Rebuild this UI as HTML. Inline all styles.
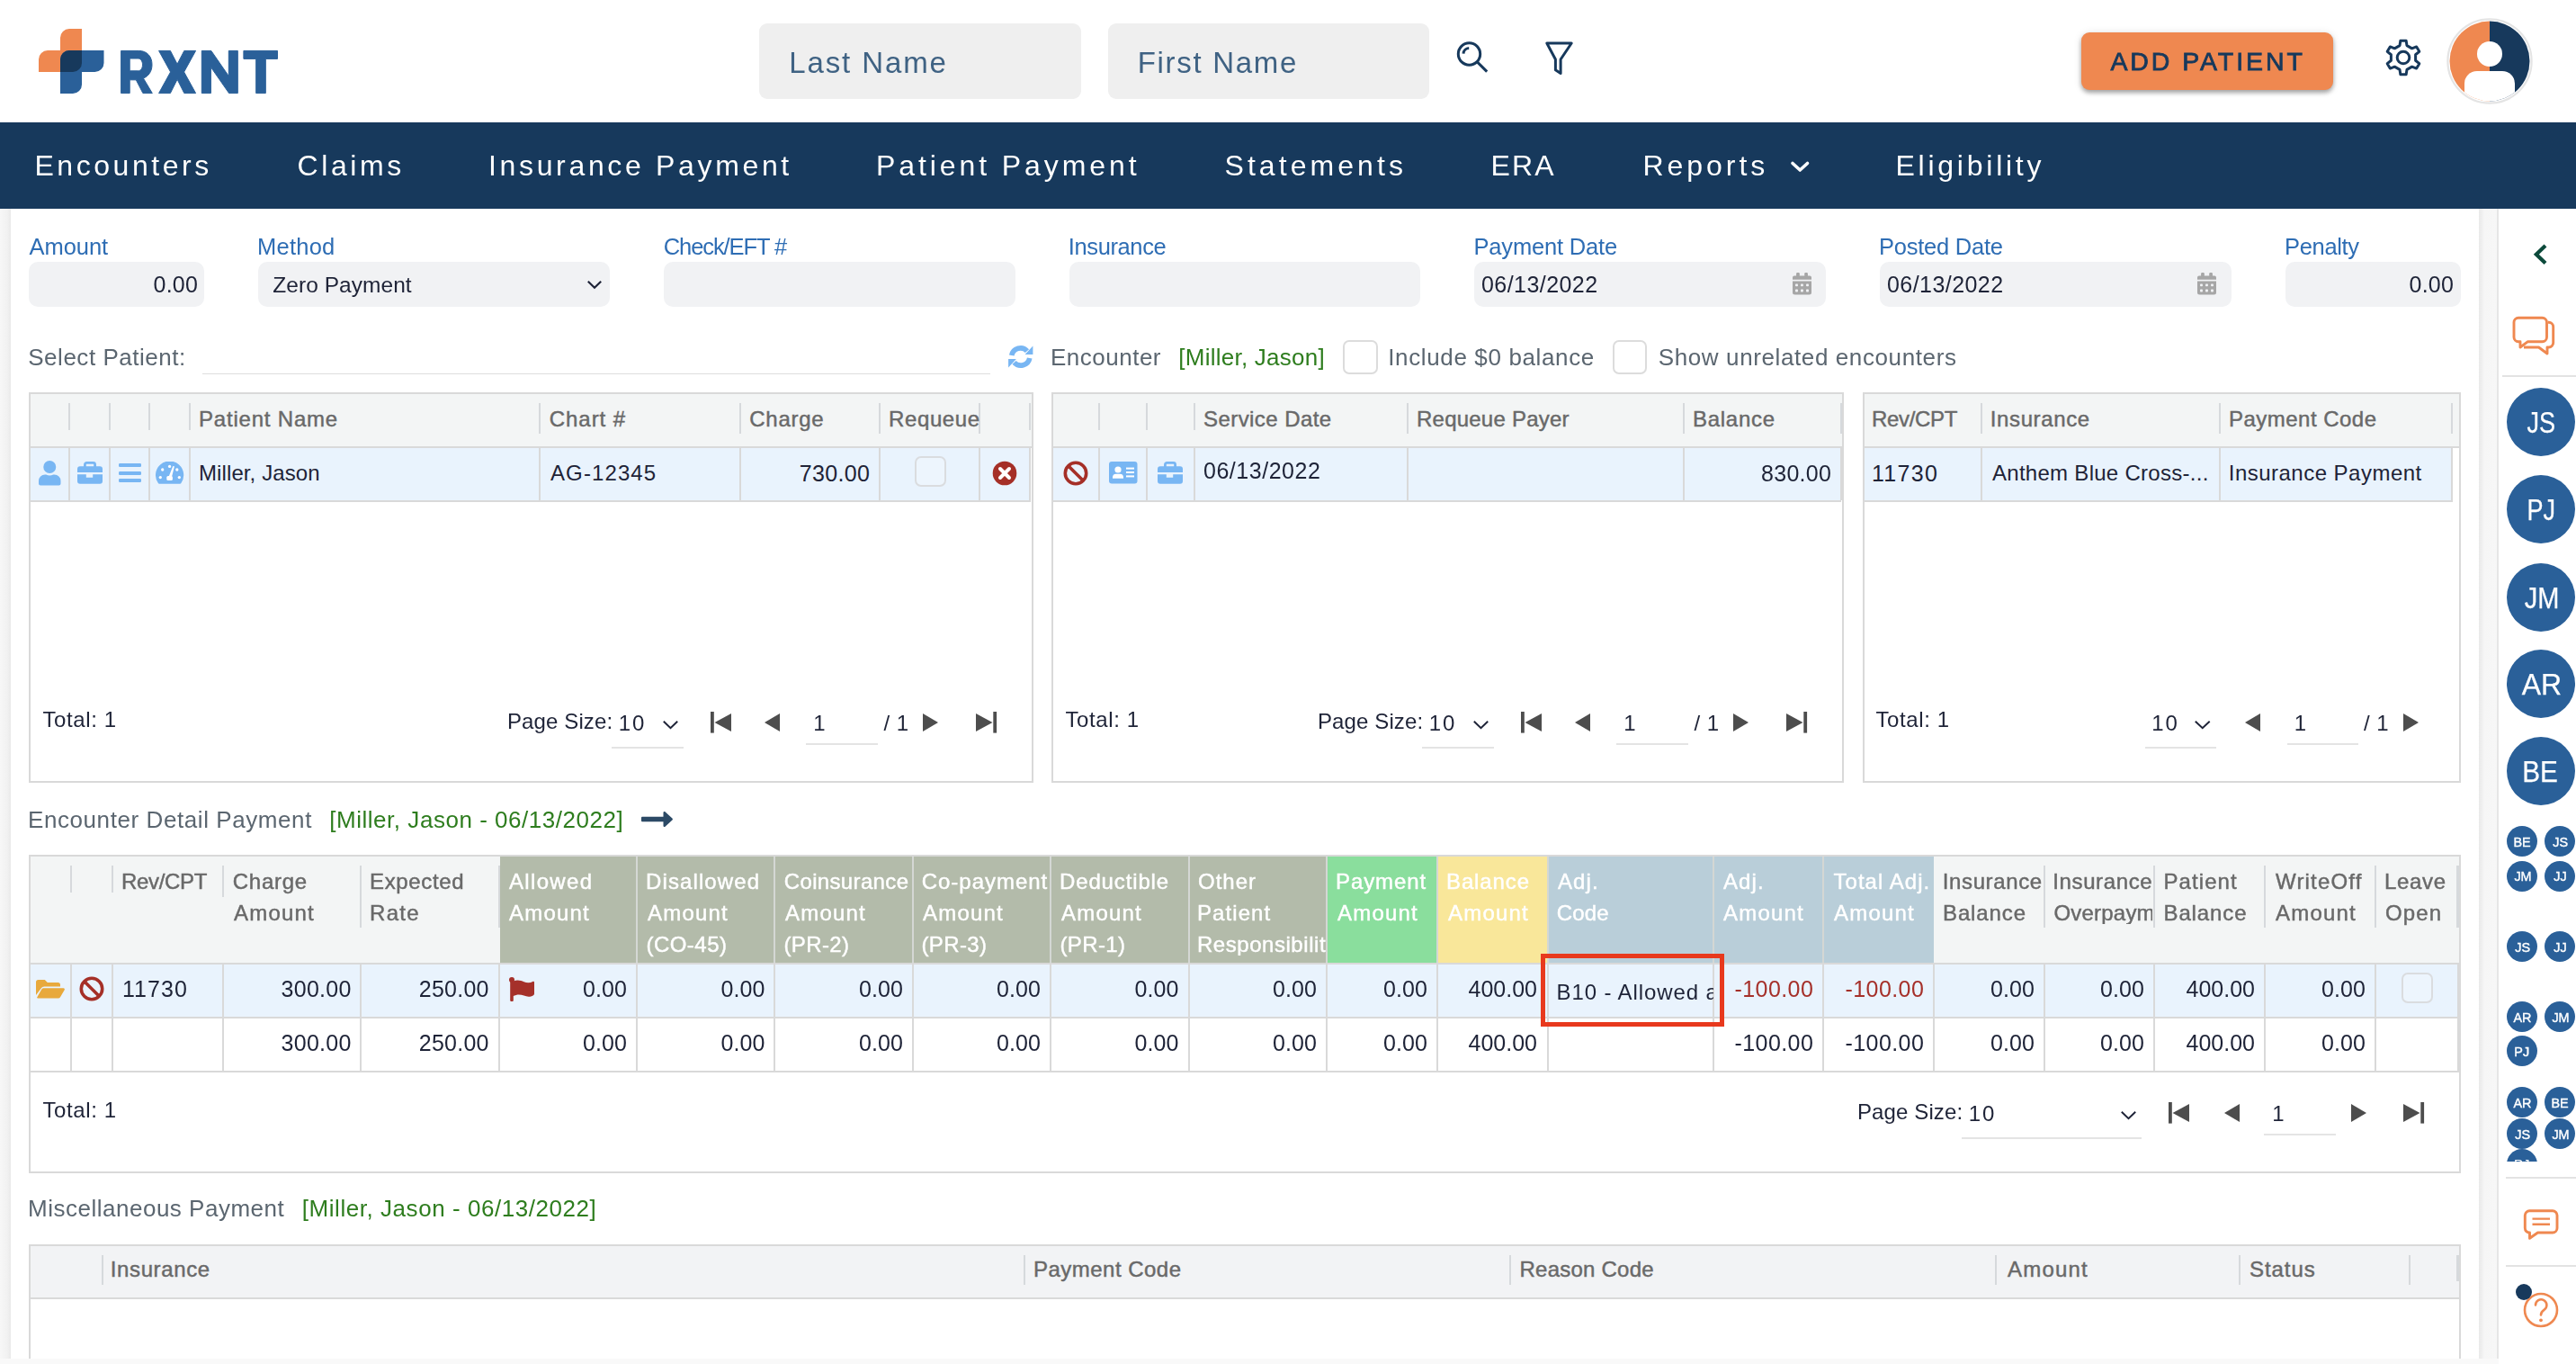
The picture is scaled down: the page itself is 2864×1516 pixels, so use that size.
<!DOCTYPE html>
<html><head><meta charset="utf-8"><title>Insurance Payment</title>
<style>
html,body{margin:0;padding:0}
body{width:2864px;height:1516px;overflow:hidden;background:#fff;position:relative;font-family:"Liberation Sans",sans-serif}
.b{position:absolute;display:block}
.t{position:absolute;display:block;white-space:nowrap;line-height:1}
#w{position:absolute;left:0;top:0;width:2864px;height:1516px;will-change:opacity}
</style></head>
<body>
<div id="w">
<div class="b" style="left:0;top:232px;width:12px;height:1284px;background:linear-gradient(to right,#f7f7f7 0,#f1f1f1 70%,#e9e9e9 100%)"></div>
<div class="b" style="left:2756px;top:232px;width:20px;height:1284px;background:linear-gradient(to right,#e9e9e9 0,#efefef 16%,#f6f6f6 30%,#f7f7f7 100%)"></div>
<div class="b" style="left:2776px;top:232px;width:2px;height:1284px;background:#e6e6e6;"></div>
<div class="b" style="left:2778px;top:232px;width:86px;height:1284px;background:#fff;"></div>
<svg class="b" style="left:40px;top:28px" width="80" height="80" viewBox="40 28 80 80"><path d="M67,42 a10,10 0 0 1 10,-10 H91 V70 a10,10 0 0 1 -10,10 H43 V66 a10,10 0 0 1 10,-10 H67 Z" fill="#ef8850"/><path d="M77,56 H115.5 V70 a10,10 0 0 1 -10,10 H91 V94 a10,10 0 0 1 -10,10 H67 V66 a10,10 0 0 1 10,-10 Z" fill="#2a6099"/><path d="M77,56 H91 V70 a10,10 0 0 1 -10,10 H67 V66 a10,10 0 0 1 10,-10 Z" fill="#17395c"/></svg>
<svg class="b" style="left:130px;top:50px" width="184" height="60" viewBox="130 50 184 60"><g fill="#2a6099" stroke="#2a6099" stroke-width="1" stroke-linejoin="round" fill-rule="evenodd"><path d="M134.6,56.4 H154.3 C163.4,56.4 169,62.6 169,71.8 C169,79.4 165.3,84.6 159.4,87 L169.3,103.6 H158.9 L151.3,88.8 H144.2 V103.6 H134.6 Z M144.2,65 V78.8 H153.3 C156.4,78.8 158.5,76 158.5,71.9 C158.5,67.8 156.4,65 153.3,65 Z"/><path d="M176.6,56.4 H189.4 L197.1,71.3 L204.8,56.4 H217.6 L204.6,80 L217.6,103.6 H204.8 L197.1,88.2 L189.4,103.6 H176.6 L189.6,80 Z"/><path d="M224.3,56.4 H234.8 L254.3,84.6 V56.4 H264.3 V103.6 H254.6 L234.4,74.6 V103.6 H224.3 Z"/><path d="M270.9,56.4 H308.5 V65.4 H295.3 V103.6 H284.7 V65.4 H270.9 Z"/></g></svg>
<span class="t" style="left:134px;top:50px;font-size:60px;color:transparent;opacity:0;width:0;overflow:hidden">RXNT</span>
<div class="b" style="left:844px;top:26px;width:358px;height:84px;background:#efefef;border-radius:9px;"></div>
<div class="b" style="left:1232px;top:26px;width:357px;height:84px;background:#efefef;border-radius:9px;"></div>
<span class="t" style="left:877.25px;top:52.57px;font-size:33px;color:#3f6283;letter-spacing:1.88px;">Last Name</span>
<span class="t" style="left:1264.75px;top:52.57px;font-size:33px;color:#3f6283;letter-spacing:1.69px;">First Name</span>
<svg class="b" style="left:1615px;top:42px" width="45" height="46" viewBox="1615 42 45 46"><g fill="none" stroke="#17395c" stroke-width="3"><circle cx="1633.5" cy="60" r="12.2"/><path d="M1642.4,68.9 L1653.2,79.6" stroke-width="3"/><path d="M1627,59.6 A6.5,6.5 0 0 1 1633.2,53.5" stroke-width="3"/></g></svg>
<svg class="b" style="left:1712px;top:42px" width="44" height="48" viewBox="1712 42 44 48"><path d="M1719.8,48 H1747.2 L1735.1,66 V81.4 L1729.4,77.8 V66 Z" fill="none" stroke="#17395c" stroke-width="3" stroke-linejoin="round"/></svg>
<div class="b" style="left:2314px;top:36px;width:280px;height:64px;background:#ef8850;border-radius:9px;box-shadow:0 3px 5px rgba(0,0,0,.32),0 1px 10px rgba(0,0,0,.12);"></div>
<span class="t" style="left:2346.4px;top:53.87px;font-size:28.5px;color:#17395c;letter-spacing:2.93px;-webkit-text-stroke:0.8px #17395c;">ADD PATIENT</span>
<svg class="b" style="left:2648px;top:40px" width="48" height="48" viewBox="2648 40 48 48"><g fill="none" stroke="#17395c" stroke-width="3" stroke-linejoin="round"><path d="M2668.86,45.26 L2675.14,45.26 L2675.98,50.58 L2681.64,53.84 L2686.66,51.91 L2689.8,57.35 L2685.61,60.73 L2685.61,67.27 L2689.8,70.65 L2686.66,76.09 L2681.64,74.16 L2675.98,77.42 L2675.14,82.74 L2668.86,82.74 L2668.02,77.42 L2662.36,74.16 L2657.34,76.09 L2654.2,70.65 L2658.39,67.27 L2658.39,60.73 L2654.2,57.35 L2657.34,51.91 L2662.36,53.84 L2668.02,50.58 Z"/><circle cx="2672" cy="64" r="6.8"/></g></svg>
<svg class="b" style="left:2718px;top:18px" width="100" height="100" viewBox="2718 18 100 100"><defs><clipPath id="av"><circle cx="2768" cy="68" r="44.5"/></clipPath></defs><circle cx="2768" cy="68" r="46.6" fill="#fff" stroke="#e4e4e4" stroke-width="2.2"/><g clip-path="url(#av)"><rect x="2720" y="20" width="48" height="100" fill="#ef8850"/><rect x="2768" y="20" width="50" height="100" fill="#17395c"/><circle cx="2768" cy="60" r="14" fill="#fff"/><rect x="2740" y="79" width="56" height="60" rx="14" fill="#fff"/></g></svg>
<div class="b" style="left:0px;top:136px;width:2864px;height:96px;background:#17395c;"></div>
<span class="t" style="left:38.5px;top:167.91px;font-size:32px;color:#fff;letter-spacing:3.53px;">Encounters</span>
<span class="t" style="left:330.5px;top:167.91px;font-size:32px;color:#fff;letter-spacing:3.6px;">Claims</span>
<span class="t" style="left:543px;top:167.91px;font-size:32px;color:#fff;letter-spacing:3.66px;">Insurance Payment</span>
<span class="t" style="left:974px;top:167.91px;font-size:32px;color:#fff;letter-spacing:3.91px;">Patient Payment</span>
<span class="t" style="left:1361.5px;top:167.91px;font-size:32px;color:#fff;letter-spacing:4.06px;">Statements</span>
<span class="t" style="left:1657.5px;top:167.91px;font-size:32px;color:#fff;letter-spacing:2.12px;">ERA</span>
<span class="t" style="left:1826.5px;top:167.91px;font-size:32px;color:#fff;letter-spacing:3.96px;">Reports</span>
<span class="t" style="left:2107.5px;top:167.91px;font-size:32px;color:#fff;letter-spacing:3.75px;">Eligibility</span>
<svg class="b" style="left:1986px;top:174px" width="30" height="22" viewBox="1986 174 30 22"><path d="M1993,181.5 L2001.25,189 L2009.5,181.5" fill="none" stroke="#fff" stroke-width="3.6" stroke-linecap="round" stroke-linejoin="round"/></svg>
<span class="t" style="left:32.5px;top:262.41px;font-size:25.5px;color:#2e6db4;letter-spacing:-0.05px;">Amount</span>
<span class="t" style="left:286px;top:262.41px;font-size:25.5px;color:#2e6db4;letter-spacing:0.25px;">Method</span>
<span class="t" style="left:737.75px;top:262.41px;font-size:25.5px;color:#2e6db4;letter-spacing:-1.1px;">Check/EFT #</span>
<span class="t" style="left:1187.75px;top:262.41px;font-size:25.5px;color:#2e6db4;letter-spacing:-0.38px;">Insurance</span>
<span class="t" style="left:1638.5px;top:262.41px;font-size:25.5px;color:#2e6db4;letter-spacing:-0.18px;">Payment Date</span>
<span class="t" style="left:2089px;top:262.41px;font-size:25.5px;color:#2e6db4;letter-spacing:-0.23px;">Posted Date</span>
<span class="t" style="left:2540px;top:262.41px;font-size:25.5px;color:#2e6db4;letter-spacing:-0.33px;">Penalty</span>
<div class="b" style="left:32px;top:291px;width:195px;height:50px;background:#f1f2f4;border-radius:10px;"></div>
<div class="b" style="left:287px;top:291px;width:391px;height:50px;background:#f1f2f4;border-radius:10px;"></div>
<div class="b" style="left:738px;top:291px;width:391px;height:50px;background:#f1f2f4;border-radius:10px;"></div>
<div class="b" style="left:1189px;top:291px;width:390px;height:50px;background:#f1f2f4;border-radius:10px;"></div>
<div class="b" style="left:1639px;top:291px;width:391px;height:50px;background:#f1f2f4;border-radius:10px;"></div>
<div class="b" style="left:2090px;top:291px;width:391px;height:50px;background:#f1f2f4;border-radius:10px;"></div>
<div class="b" style="left:2541px;top:291px;width:195px;height:50px;background:#f1f2f4;border-radius:10px;"></div>
<span class="t" style="left:170.5px;top:304.44px;font-size:25px;color:#1e2337;letter-spacing:0.25px;">0.00</span>
<span class="t" style="left:2678.5px;top:304.44px;font-size:25px;color:#1e2337;letter-spacing:0.25px;">0.00</span>
<span class="t" style="left:303.25px;top:304.86px;font-size:24.5px;color:#1e2337;letter-spacing:0.05px;">Zero Payment</span>
<svg class="b" style="left:651px;top:310px" width="20" height="12.5" viewBox="651 310 20 12.5"><path d="M653.8,312.8 L661,319.7 L668.2,312.8" fill="none" stroke="#1e2337" stroke-width="2.2"/></svg>
<span class="t" style="left:1647px;top:304.44px;font-size:25px;color:#1e2337;letter-spacing:0.44px;">06/13/2022</span>
<span class="t" style="left:2098px;top:304.44px;font-size:25px;color:#1e2337;letter-spacing:0.44px;">06/13/2022</span>
<svg class="b" style="left:1993px;top:303.4px" width="22" height="25" viewBox="1993 303.4 22 25"><g transform="translate(1993,303.4)" fill="#a6a6a6"><rect x="4.1" y="0" width="3.7" height="5.5" rx="1.2"/><rect x="13.25" y="0" width="3.7" height="5.5" rx="1.2"/><path d="M2,3.4 H19 A2,2 0 0 1 21,5.4 V7.7 H0 V5.4 A2,2 0 0 1 2,3.4 Z"/><path d="M0,9.6 H21 V22 A2.5,2.5 0 0 1 18.5,24.5 H2.5 A2.5,2.5 0 0 1 0,22 Z"/><rect x="3.05" y="12.450000000000001" width="2.9" height="2.9" rx=".8" fill="#f1f2f4"/><rect x="3.05" y="18.55" width="2.9" height="2.9" rx=".8" fill="#f1f2f4"/><rect x="9.0" y="12.450000000000001" width="2.9" height="2.9" rx=".8" fill="#f1f2f4"/><rect x="9.0" y="18.55" width="2.9" height="2.9" rx=".8" fill="#f1f2f4"/><rect x="15.05" y="12.450000000000001" width="2.9" height="2.9" rx=".8" fill="#f1f2f4"/><rect x="15.05" y="18.55" width="2.9" height="2.9" rx=".8" fill="#f1f2f4"/></g></svg>
<svg class="b" style="left:2443.3px;top:303.4px" width="22" height="25" viewBox="2443.3 303.4 22 25"><g transform="translate(2443.3,303.4)" fill="#a6a6a6"><rect x="4.1" y="0" width="3.7" height="5.5" rx="1.2"/><rect x="13.25" y="0" width="3.7" height="5.5" rx="1.2"/><path d="M2,3.4 H19 A2,2 0 0 1 21,5.4 V7.7 H0 V5.4 A2,2 0 0 1 2,3.4 Z"/><path d="M0,9.6 H21 V22 A2.5,2.5 0 0 1 18.5,24.5 H2.5 A2.5,2.5 0 0 1 0,22 Z"/><rect x="3.05" y="12.450000000000001" width="2.9" height="2.9" rx=".8" fill="#f1f2f4"/><rect x="3.05" y="18.55" width="2.9" height="2.9" rx=".8" fill="#f1f2f4"/><rect x="9.0" y="12.450000000000001" width="2.9" height="2.9" rx=".8" fill="#f1f2f4"/><rect x="9.0" y="18.55" width="2.9" height="2.9" rx=".8" fill="#f1f2f4"/><rect x="15.05" y="12.450000000000001" width="2.9" height="2.9" rx=".8" fill="#f1f2f4"/><rect x="15.05" y="18.55" width="2.9" height="2.9" rx=".8" fill="#f1f2f4"/></g></svg>
<span class="t" style="left:31.25px;top:383.99px;font-size:26px;color:#5b6670;letter-spacing:0.52px;">Select Patient:</span>
<div class="b" style="left:225px;top:414.5px;width:876px;height:1.7px;background:#dedede;"></div>
<svg class="b" style="left:1121px;top:383px" width="28" height="28" viewBox="1121 383 28 28"><g transform="translate(1121,383)"><g fill="none" stroke="#78b6f3" stroke-width="5.7"><path d="M3.75,12 A10,10 0 0 1 20.95,7.1"/><path d="M23.75,15 A10,10 0 0 1 6.55,19.9"/></g><path d="M27.4,1.6 V11 H18.6 Z M0.1,25.4 V16 H8.9 Z" fill="#78b6f3"/></g></svg>
<span class="t" style="left:1168px;top:383.99px;font-size:26px;color:#5b6670;letter-spacing:0.5px;">Encounter</span>
<span class="t" style="left:1310.25px;top:383.99px;font-size:26px;color:#2e7d1e;letter-spacing:0.25px;">[Miller, Jason]</span>
<div class="b" style="left:1492.5px;top:377.5px;width:39px;height:38px;box-sizing:border-box;border:2px solid #dcdcdc;border-radius:7px;background:#fff"></div>
<span class="t" style="left:1543.25px;top:383.99px;font-size:26px;color:#5b6670;letter-spacing:0.63px;">Include $0 balance</span>
<div class="b" style="left:1792.5px;top:377.5px;width:38px;height:38px;box-sizing:border-box;border:2px solid #dcdcdc;border-radius:7px;background:#fff"></div>
<span class="t" style="left:1843.75px;top:383.99px;font-size:26px;color:#5b6670;letter-spacing:0.61px;">Show unrelated encounters</span>
<div class="b" style="left:32px;top:436px;width:1117px;height:434px;box-sizing:border-box;border:2px solid #d9d9d9;background:#fff;"></div>
<div class="b" style="left:34px;top:438px;width:1113px;height:59px;background:#f3f5f5;"></div>
<div class="b" style="left:34px;top:496px;width:1113px;height:2px;background:#d9d9d9;"></div>
<div class="b" style="left:34px;top:498px;width:1110px;height:57.5px;background:#e9f3fd;"></div>
<div class="b" style="left:34px;top:555.5px;width:1112px;height:2px;background:#d9d9d9;"></div>
<div class="b" style="left:76px;top:448px;width:2px;height:30px;background:#d6d9dc;"></div>
<div class="b" style="left:76px;top:498px;width:2px;height:58px;background:#d9d9d9;"></div>
<div class="b" style="left:121px;top:448px;width:2px;height:30px;background:#d6d9dc;"></div>
<div class="b" style="left:121px;top:498px;width:2px;height:58px;background:#d9d9d9;"></div>
<div class="b" style="left:165px;top:448px;width:2px;height:30px;background:#d6d9dc;"></div>
<div class="b" style="left:165px;top:498px;width:2px;height:58px;background:#d9d9d9;"></div>
<div class="b" style="left:210px;top:448px;width:2px;height:30px;background:#d6d9dc;"></div>
<div class="b" style="left:210px;top:498px;width:2px;height:58px;background:#d9d9d9;"></div>
<div class="b" style="left:599px;top:448px;width:2px;height:34px;background:#d6d9dc;"></div>
<div class="b" style="left:599px;top:498px;width:2px;height:58px;background:#d9d9d9;"></div>
<div class="b" style="left:822px;top:448px;width:2px;height:34px;background:#d6d9dc;"></div>
<div class="b" style="left:822px;top:498px;width:2px;height:58px;background:#d9d9d9;"></div>
<div class="b" style="left:977px;top:448px;width:2px;height:34px;background:#d6d9dc;"></div>
<div class="b" style="left:977px;top:498px;width:2px;height:58px;background:#d9d9d9;"></div>
<div class="b" style="left:1088px;top:448px;width:2px;height:34px;background:#d6d9dc;"></div>
<div class="b" style="left:1088px;top:498px;width:2px;height:58px;background:#d9d9d9;"></div>
<div class="b" style="left:1144px;top:448px;width:2px;height:30px;background:#d6d9dc;"></div>
<div class="b" style="left:1144px;top:498px;width:2px;height:58px;background:#d9d9d9;"></div>
<span class="t" style="left:221px;top:453.68px;font-size:24px;color:#696969;letter-spacing:0.8px;-webkit-text-stroke:0.45px #696969;">Patient Name</span>
<span class="t" style="left:610.75px;top:453.68px;font-size:24px;color:#696969;letter-spacing:0.96px;-webkit-text-stroke:0.45px #696969;">Chart #</span>
<span class="t" style="left:833.25px;top:453.68px;font-size:24px;color:#696969;letter-spacing:0.75px;-webkit-text-stroke:0.45px #696969;">Charge</span>
<span class="t" style="left:988px;top:453.68px;font-size:24px;color:#696969;letter-spacing:0.62px;-webkit-text-stroke:0.45px #696969;width:102px;overflow:hidden;">Requeue</span>
<svg class="b" style="left:43px;top:512px" width="25" height="28" viewBox="43 512 25 28"><g fill="#78b6f3" transform="translate(43,512)"><circle cx="12.25" cy="7" r="7"/><path d="M0,25.5 V22.5 A7,7 0 0 1 7,15.5 H8.2 A9,9 0 0 0 16.3,15.5 H17.5 A7,7 0 0 1 24.5,22.5 V25.5 A2,2 0 0 1 22.5,27.5 H2 A2,2 0 0 1 0,25.5 Z"/></g></svg>
<svg class="b" style="left:86px;top:513px" width="28" height="25" viewBox="86 513 28 25"><g transform="translate(86,513)"><rect x="8.4" y="1.4" width="11.2" height="6.5" rx="2" fill="none" stroke="#78b6f3" stroke-width="2.8"/><path d="M3,5.3 H25 A3,3 0 0 1 28,8.3 V11.9 H0 V8.3 A3,3 0 0 1 3,5.3 Z" fill="#78b6f3"/><path d="M0,14.3 H9.8 V17.8 H17.2 V14.3 H28 V21.8 A3,3 0 0 1 25,24.8 H3 A3,3 0 0 1 0,21.8 Z" fill="#78b6f3"/></g></svg>
<div class="b" style="left:132px;top:514.8px;width:24.8px;height:4px;background:#78b6f3;border-radius:1.2px;"></div>
<div class="b" style="left:132px;top:523.7px;width:24.8px;height:4px;background:#78b6f3;border-radius:1.2px;"></div>
<div class="b" style="left:132px;top:532.1px;width:24.8px;height:4px;background:#78b6f3;border-radius:1.2px;"></div>
<svg class="b" style="left:173px;top:513px" width="32" height="25" viewBox="173 513 32 25"><g transform="translate(173,513)"><path d="M3,24.3 A15.6,15.6 0 1 1 28.2,24.3 A1.4,1.4 0 0 1 27.2,24.8 H4 A1.4,1.4 0 0 1 3,24.3 Z" fill="#78b6f3"/><g fill="#fff"><circle cx="5.3" cy="17.6" r="1.65"/><circle cx="7.7" cy="9" r="1.65"/><circle cx="26.3" cy="17.6" r="1.65"/><circle cx="23.8" cy="9" r="1.65"/><circle cx="15.6" cy="5.4" r="1.65"/><rect x="12.3" y="15.9" width="6.6" height="5.2" rx="1.6"/><path d="M14.3,17.4 L19.2,5.2 Q20.2,4.6 20.9,5.6 L17.6,18.4 Z"/></g></g></svg>
<span class="t" style="left:221px;top:514.18px;font-size:24px;color:#1e2337;letter-spacing:0.1px;">Miller, Jason</span>
<span class="t" style="left:612px;top:514.18px;font-size:24px;color:#1e2337;letter-spacing:1.11px;">AG-12345</span>
<span class="t" style="left:888.75px;top:513.64px;font-size:25px;color:#1e2337;letter-spacing:0.35px;">730.00</span>
<div class="b" style="left:1016.5px;top:506.5px;width:35px;height:34.5px;box-sizing:border-box;border:2px solid #dadcdf;border-radius:7px;background:#edf5fd"></div>
<svg class="b" style="left:1103px;top:511.5px" width="28" height="28" viewBox="1103 511.5 28 28"><circle cx="1117" cy="525.5" r="13.3" fill="#a52f27"/><path d="M1112,520.5 L1122,530.5 M1122,520.5 L1112,530.5" stroke="#fff" stroke-width="4" stroke-linecap="round"/></svg>
<span class="t" style="left:47.5px;top:787.68px;font-size:24px;color:#1e2337;letter-spacing:0.61px;">Total: 1</span>
<span class="t" style="left:564px;top:790.18px;font-size:24px;color:#1e2337;letter-spacing:0.11px;">Page Size:</span>
<span class="t" style="left:687.75px;top:792.18px;font-size:24px;color:#1e2337;letter-spacing:2px;">10</span>
<svg class="b" style="left:735px;top:798.5px" width="21" height="13" viewBox="735 798.5 21 13"><path d="M737.8,801.3 L745.5,808.7 L753.2,801.3" fill="none" stroke="#1e2337" stroke-width="2"/></svg>
<div class="b" style="left:680px;top:830.3px;width:80px;height:1.5px;background:#e4e4e4;"></div>
<svg class="b" style="left:789px;top:790px" width="26" height="26" viewBox="789 790 26 26"><rect x="790" y="791" width="3.8" height="23.6" fill="#4d4d4d"/><path d="M813,793 L794.5,803 L813,813 Z" fill="#4d4d4d"/></svg>
<svg class="b" style="left:849px;top:790px" width="20" height="26" viewBox="849 790 20 26"><path d="M867,793 L850,803 L867,813 Z" fill="#4d4d4d"/></svg>
<span class="t" style="left:904.25px;top:792.18px;font-size:24px;color:#1e2337;">1</span>
<div class="b" style="left:896px;top:826.3px;width:80px;height:1.5px;background:#e4e4e4;"></div>
<span class="t" style="left:982.5px;top:792.18px;font-size:24px;color:#1e2337;letter-spacing:0.5px;">/ 1</span>
<svg class="b" style="left:1025px;top:790px" width="20" height="26" viewBox="1025 790 20 26"><path d="M1026,793 L1043,803 L1026,813 Z" fill="#4d4d4d"/></svg>
<svg class="b" style="left:1084px;top:790px" width="26" height="26" viewBox="1084 790 26 26"><path d="M1085,793 L1103.5,803 L1085,813 Z" fill="#4d4d4d"/><rect x="1104.3" y="791" width="3.8" height="23.6" fill="#4d4d4d"/></svg>
<div class="b" style="left:1169px;top:436px;width:881px;height:434px;box-sizing:border-box;border:2px solid #d9d9d9;background:#fff;"></div>
<div class="b" style="left:1171px;top:438px;width:877px;height:59px;background:#f3f5f5;"></div>
<div class="b" style="left:1171px;top:496px;width:877px;height:2px;background:#d9d9d9;"></div>
<div class="b" style="left:1171px;top:498px;width:875px;height:57.5px;background:#e9f3fd;"></div>
<div class="b" style="left:1171px;top:555.5px;width:876px;height:2px;background:#d9d9d9;"></div>
<div class="b" style="left:1221px;top:448px;width:2px;height:30px;background:#d6d9dc;"></div>
<div class="b" style="left:1221px;top:498px;width:2px;height:58px;background:#d9d9d9;"></div>
<div class="b" style="left:1274px;top:448px;width:2px;height:30px;background:#d6d9dc;"></div>
<div class="b" style="left:1274px;top:498px;width:2px;height:58px;background:#d9d9d9;"></div>
<div class="b" style="left:1327px;top:448px;width:2px;height:30px;background:#d6d9dc;"></div>
<div class="b" style="left:1327px;top:498px;width:2px;height:58px;background:#d9d9d9;"></div>
<div class="b" style="left:1564px;top:448px;width:2px;height:34px;background:#d6d9dc;"></div>
<div class="b" style="left:1564px;top:498px;width:2px;height:58px;background:#d9d9d9;"></div>
<div class="b" style="left:1871px;top:448px;width:2px;height:34px;background:#d6d9dc;"></div>
<div class="b" style="left:1871px;top:498px;width:2px;height:58px;background:#d9d9d9;"></div>
<div class="b" style="left:2046px;top:448px;width:2px;height:34px;background:#d6d9dc;"></div>
<div class="b" style="left:2046px;top:498px;width:2px;height:58px;background:#d9d9d9;"></div>
<span class="t" style="left:1338px;top:453.68px;font-size:24px;color:#696969;letter-spacing:0.43px;-webkit-text-stroke:0.45px #696969;">Service Date</span>
<span class="t" style="left:1575px;top:453.68px;font-size:24px;color:#696969;letter-spacing:0.23px;-webkit-text-stroke:0.45px #696969;">Requeue Payer</span>
<span class="t" style="left:1882px;top:453.68px;font-size:24px;color:#696969;letter-spacing:0.71px;-webkit-text-stroke:0.45px #696969;">Balance</span>
<svg class="b" style="left:1182px;top:511.5px" width="28" height="28" viewBox="1182 511.5 28 28"><g fill="none" stroke="#a52f27" stroke-width="3.6"><circle cx="1196" cy="525.5" r="11.7"/><path d="M1187.7,517.2 L1204.3,533.8"/></g></svg>
<svg class="b" style="left:1233px;top:513px" width="32" height="25" viewBox="1233 513 32 25"><g transform="translate(1233,513)"><rect width="31.5" height="24.5" rx="3" fill="#78b6f3"/><g fill="#fff"><circle cx="10" cy="9" r="3.6"/><path d="M4,18.8 V17.6 A3.8,3.8 0 0 1 7.8,13.8 H12.2 A3.8,3.8 0 0 1 16,17.6 V18.8 Z"/><rect x="19" y="6.6" width="9" height="2"/><rect x="19" y="11" width="9" height="2"/><rect x="19" y="15.4" width="9" height="2"/></g></g></svg>
<svg class="b" style="left:1287px;top:513px" width="28" height="25" viewBox="1287 513 28 25"><g transform="translate(1287,513)"><rect x="8.4" y="1.4" width="11.2" height="6.5" rx="2" fill="none" stroke="#78b6f3" stroke-width="2.8"/><path d="M3,5.3 H25 A3,3 0 0 1 28,8.3 V11.9 H0 V8.3 A3,3 0 0 1 3,5.3 Z" fill="#78b6f3"/><path d="M0,14.3 H9.8 V17.8 H17.2 V14.3 H28 V21.8 A3,3 0 0 1 25,24.8 H3 A3,3 0 0 1 0,21.8 Z" fill="#78b6f3"/></g></svg>
<span class="t" style="left:1338px;top:511.14px;font-size:25px;color:#1e2337;letter-spacing:0.53px;">06/13/2022</span>
<span class="t" style="left:1958px;top:513.64px;font-size:25px;color:#1e2337;letter-spacing:0.3px;">830.00</span>
<span class="t" style="left:1184.5px;top:787.68px;font-size:24px;color:#1e2337;letter-spacing:0.61px;">Total: 1</span>
<span class="t" style="left:1465px;top:790.18px;font-size:24px;color:#1e2337;letter-spacing:0.11px;">Page Size:</span>
<span class="t" style="left:1588.75px;top:792.18px;font-size:24px;color:#1e2337;letter-spacing:2px;">10</span>
<svg class="b" style="left:1636px;top:798.5px" width="21" height="13" viewBox="1636 798.5 21 13"><path d="M1638.8,801.3 L1646.5,808.7 L1654.2,801.3" fill="none" stroke="#1e2337" stroke-width="2"/></svg>
<div class="b" style="left:1581px;top:830.3px;width:80px;height:1.5px;background:#e4e4e4;"></div>
<svg class="b" style="left:1690px;top:790px" width="26" height="26" viewBox="1690 790 26 26"><rect x="1691" y="791" width="3.8" height="23.6" fill="#4d4d4d"/><path d="M1714,793 L1695.5,803 L1714,813 Z" fill="#4d4d4d"/></svg>
<svg class="b" style="left:1750px;top:790px" width="20" height="26" viewBox="1750 790 20 26"><path d="M1768,793 L1751,803 L1768,813 Z" fill="#4d4d4d"/></svg>
<span class="t" style="left:1805.25px;top:792.18px;font-size:24px;color:#1e2337;">1</span>
<div class="b" style="left:1797px;top:826.3px;width:80px;height:1.5px;background:#e4e4e4;"></div>
<span class="t" style="left:1883.5px;top:792.18px;font-size:24px;color:#1e2337;letter-spacing:0.5px;">/ 1</span>
<svg class="b" style="left:1926px;top:790px" width="20" height="26" viewBox="1926 790 20 26"><path d="M1927,793 L1944,803 L1927,813 Z" fill="#4d4d4d"/></svg>
<svg class="b" style="left:1985px;top:790px" width="26" height="26" viewBox="1985 790 26 26"><path d="M1986,793 L2004.5,803 L1986,813 Z" fill="#4d4d4d"/><rect x="2005.3" y="791" width="3.8" height="23.6" fill="#4d4d4d"/></svg>
<div class="b" style="left:2070.5px;top:436px;width:665.5px;height:434px;box-sizing:border-box;border:2px solid #d9d9d9;background:#fff;"></div>
<div class="b" style="left:2073px;top:438px;width:661px;height:59px;background:#f3f5f5;"></div>
<div class="b" style="left:2073px;top:496px;width:661px;height:2px;background:#d9d9d9;"></div>
<div class="b" style="left:2073px;top:498px;width:652px;height:57.5px;background:#e9f3fd;"></div>
<div class="b" style="left:2073px;top:555.5px;width:654px;height:2px;background:#d9d9d9;"></div>
<div class="b" style="left:2202px;top:448px;width:2px;height:34px;background:#d6d9dc;"></div>
<div class="b" style="left:2202px;top:498px;width:2px;height:58px;background:#d9d9d9;"></div>
<div class="b" style="left:2467px;top:448px;width:2px;height:34px;background:#d6d9dc;"></div>
<div class="b" style="left:2467px;top:498px;width:2px;height:58px;background:#d9d9d9;"></div>
<div class="b" style="left:2725px;top:448px;width:2px;height:34px;background:#d6d9dc;"></div>
<div class="b" style="left:2725px;top:498px;width:2px;height:58px;background:#d9d9d9;"></div>
<span class="t" style="left:2081px;top:453.68px;font-size:24px;color:#696969;letter-spacing:-0.33px;-webkit-text-stroke:0.45px #696969;">Rev/CPT</span>
<span class="t" style="left:2212.75px;top:453.68px;font-size:24px;color:#696969;letter-spacing:0.62px;-webkit-text-stroke:0.45px #696969;">Insurance</span>
<span class="t" style="left:2478px;top:453.68px;font-size:24px;color:#696969;letter-spacing:0.48px;-webkit-text-stroke:0.45px #696969;">Payment Code</span>
<span class="t" style="left:2081px;top:513.64px;font-size:25px;color:#1e2337;letter-spacing:1.31px;">11730</span>
<span class="t" style="left:2215px;top:514.18px;font-size:24px;color:#1e2337;letter-spacing:0.28px;">Anthem Blue Cross-...</span>
<span class="t" style="left:2477.75px;top:514.18px;font-size:24px;color:#1e2337;letter-spacing:0.48px;">Insurance Payment</span>
<span class="t" style="left:2085.5px;top:787.68px;font-size:24px;color:#1e2337;letter-spacing:0.61px;">Total: 1</span>
<span class="t" style="left:2392.25px;top:792.18px;font-size:24px;color:#1e2337;letter-spacing:2px;">10</span>
<svg class="b" style="left:2438px;top:798.5px" width="21.5" height="13" viewBox="2438 798.5 21.5 13"><path d="M2440.8,801.3 L2448.75,808.7 L2456.7,801.3" fill="none" stroke="#1e2337" stroke-width="2"/></svg>
<div class="b" style="left:2384.5px;top:830.3px;width:79.5px;height:1.5px;background:#e4e4e4;"></div>
<svg class="b" style="left:2495px;top:790px" width="20" height="26" viewBox="2495 790 20 26"><path d="M2513,793 L2496,803 L2513,813 Z" fill="#4d4d4d"/></svg>
<span class="t" style="left:2550.75px;top:792.18px;font-size:24px;color:#1e2337;">1</span>
<div class="b" style="left:2542.5px;top:826.3px;width:79.5px;height:1.5px;background:#e4e4e4;"></div>
<span class="t" style="left:2628px;top:792.18px;font-size:24px;color:#1e2337;letter-spacing:0.5px;">/ 1</span>
<svg class="b" style="left:2671px;top:790px" width="20" height="26" viewBox="2671 790 20 26"><path d="M2672,793 L2689,803 L2672,813 Z" fill="#4d4d4d"/></svg>
<span class="t" style="left:31px;top:897.99px;font-size:26px;color:#5b6670;letter-spacing:0.58px;">Encounter Detail Payment</span>
<span class="t" style="left:366.25px;top:897.99px;font-size:26px;color:#2e7d1e;letter-spacing:0.53px;">[Miller, Jason - 06/13/2022]</span>
<svg class="b" style="left:713px;top:902px" width="36" height="18" viewBox="713 902 36 18"><g transform="translate(713,902)" fill="#2c4a66"><rect x="0" y="5.7" width="26" height="5.6" rx="1"/><path d="M24.5,1.2 A1.2,1.2 0 0 1 26.5,.3 L34.4,7.6 A1.2,1.2 0 0 1 34.4,9.4 L26.5,16.7 A1.2,1.2 0 0 1 24.5,15.8 Z"/></g></svg>
<span class="t" style="left:31px;top:1330.49px;font-size:26px;color:#5b6670;letter-spacing:0.51px;">Miscellaneous Payment</span>
<span class="t" style="left:335.75px;top:1330.49px;font-size:26px;color:#2e7d1e;letter-spacing:0.55px;">[Miller, Jason - 06/13/2022]</span>
<div class="b" style="left:32px;top:950px;width:2704px;height:354px;box-sizing:border-box;border:2px solid #d9d9d9;background:#fff;"></div>
<div class="b" style="left:34px;top:952px;width:2700px;height:119px;background:#f3f5f5;"></div>
<div class="b" style="left:556px;top:952px;width:919px;height:118px;background:#b3bbaa;"></div>
<div class="b" style="left:1476px;top:952px;width:122px;height:118px;background:#8ade9d;"></div>
<div class="b" style="left:1599px;top:952px;width:122px;height:118px;background:#f9e79a;"></div>
<div class="b" style="left:1722px;top:952px;width:428px;height:118px;background:#b9ced9;"></div>
<div class="b" style="left:34px;top:1070px;width:2700px;height:2px;background:#d9d9d9;"></div>
<div class="b" style="left:34px;top:1072px;width:2698px;height:58px;background:#e9f3fd;"></div>
<div class="b" style="left:34px;top:1130px;width:2700px;height:2px;background:#d9d9d9;"></div>
<div class="b" style="left:34px;top:1190px;width:2700px;height:2px;background:#d9d9d9;"></div>
<div class="b" style="left:78px;top:1072px;width:2px;height:119px;background:#d9d9d9;"></div>
<div class="b" style="left:124px;top:1072px;width:2px;height:119px;background:#d9d9d9;"></div>
<div class="b" style="left:247px;top:1072px;width:2px;height:119px;background:#d9d9d9;"></div>
<div class="b" style="left:400px;top:1072px;width:2px;height:119px;background:#d9d9d9;"></div>
<div class="b" style="left:554px;top:1072px;width:2px;height:119px;background:#d9d9d9;"></div>
<div class="b" style="left:707px;top:1072px;width:2px;height:119px;background:#d9d9d9;"></div>
<div class="b" style="left:707px;top:952px;width:2px;height:118px;background:#d4d7d4;"></div>
<div class="b" style="left:860px;top:1072px;width:2px;height:119px;background:#d9d9d9;"></div>
<div class="b" style="left:860px;top:952px;width:2px;height:118px;background:#d4d7d4;"></div>
<div class="b" style="left:1014px;top:1072px;width:2px;height:119px;background:#d9d9d9;"></div>
<div class="b" style="left:1014px;top:952px;width:2px;height:118px;background:#d4d7d4;"></div>
<div class="b" style="left:1167px;top:1072px;width:2px;height:119px;background:#d9d9d9;"></div>
<div class="b" style="left:1167px;top:952px;width:2px;height:118px;background:#d4d7d4;"></div>
<div class="b" style="left:1321px;top:1072px;width:2px;height:119px;background:#d9d9d9;"></div>
<div class="b" style="left:1321px;top:952px;width:2px;height:118px;background:#d4d7d4;"></div>
<div class="b" style="left:1474px;top:1072px;width:2px;height:119px;background:#d9d9d9;"></div>
<div class="b" style="left:1474px;top:952px;width:2px;height:118px;background:#d4d7d4;"></div>
<div class="b" style="left:1597px;top:1072px;width:2px;height:119px;background:#d9d9d9;"></div>
<div class="b" style="left:1597px;top:952px;width:2px;height:118px;background:#d4d7d4;"></div>
<div class="b" style="left:1719.5px;top:1072px;width:2px;height:119px;background:#d9d9d9;"></div>
<div class="b" style="left:1719.5px;top:952px;width:2px;height:118px;background:#d4d7d4;"></div>
<div class="b" style="left:1904px;top:1072px;width:2px;height:119px;background:#d9d9d9;"></div>
<div class="b" style="left:1904px;top:952px;width:2px;height:118px;background:#d4d7d4;"></div>
<div class="b" style="left:2026px;top:1072px;width:2px;height:119px;background:#d9d9d9;"></div>
<div class="b" style="left:2026px;top:952px;width:2px;height:118px;background:#d4d7d4;"></div>
<div class="b" style="left:2148.5px;top:1072px;width:2px;height:119px;background:#d9d9d9;"></div>
<div class="b" style="left:2272px;top:1072px;width:2px;height:119px;background:#d9d9d9;"></div>
<div class="b" style="left:2394px;top:1072px;width:2px;height:119px;background:#d9d9d9;"></div>
<div class="b" style="left:2517px;top:1072px;width:2px;height:119px;background:#d9d9d9;"></div>
<div class="b" style="left:2640px;top:1072px;width:2px;height:119px;background:#d9d9d9;"></div>
<div class="b" style="left:2732px;top:1072px;width:2px;height:119px;background:#d9d9d9;"></div>
<div class="b" style="left:78px;top:962px;width:2px;height:30px;background:#d6d9dc;"></div>
<div class="b" style="left:124px;top:962px;width:2px;height:30px;background:#d6d9dc;"></div>
<div class="b" style="left:247px;top:962px;width:2px;height:34.5px;background:#d6d9dc;"></div>
<div class="b" style="left:400px;top:962px;width:2px;height:68.5px;background:#d6d9dc;"></div>
<div class="b" style="left:554px;top:962px;width:2px;height:68.5px;background:#d6d9dc;"></div>
<div class="b" style="left:2272px;top:962px;width:2px;height:68.5px;background:#d6d9dc;"></div>
<div class="b" style="left:2394px;top:962px;width:2px;height:68.5px;background:#d6d9dc;"></div>
<div class="b" style="left:2517px;top:962px;width:2px;height:68.5px;background:#d6d9dc;"></div>
<div class="b" style="left:2640px;top:962px;width:2px;height:68.5px;background:#d6d9dc;"></div>
<div class="b" style="left:2731px;top:962px;width:3px;height:68.5px;background:#d6d9dc;"></div>
<span class="t" style="left:135px;top:967.88px;font-size:24px;color:#696969;letter-spacing:-0.33px;-webkit-text-stroke:0.45px #696969;">Rev/CPT</span>
<span class="t" style="left:258.75px;top:967.88px;font-size:24px;color:#696969;letter-spacing:0.75px;-webkit-text-stroke:0.45px #696969;">Charge</span>
<span class="t" style="left:260px;top:1002.98px;font-size:24px;color:#696969;letter-spacing:1.2px;-webkit-text-stroke:0.45px #696969;">Amount</span>
<span class="t" style="left:411px;top:967.88px;font-size:24px;color:#696969;letter-spacing:0.64px;-webkit-text-stroke:0.45px #696969;">Expected</span>
<span class="t" style="left:411px;top:1002.98px;font-size:24px;color:#696969;letter-spacing:1.33px;-webkit-text-stroke:0.45px #696969;">Rate</span>
<span class="t" style="left:566px;top:967.88px;font-size:24px;color:#fff;letter-spacing:1.33px;-webkit-text-stroke:0.45px #fff;">Allowed</span>
<span class="t" style="left:566px;top:1002.98px;font-size:24px;color:#fff;letter-spacing:1.2px;-webkit-text-stroke:0.45px #fff;">Amount</span>
<span class="t" style="left:718px;top:967.88px;font-size:24px;color:#fff;letter-spacing:1.11px;-webkit-text-stroke:0.45px #fff;">Disallowed</span>
<span class="t" style="left:720px;top:1002.98px;font-size:24px;color:#fff;letter-spacing:1.2px;-webkit-text-stroke:0.45px #fff;">Amount</span>
<span class="t" style="left:718.5px;top:1037.98px;font-size:24px;color:#fff;letter-spacing:0.46px;-webkit-text-stroke:0.45px #fff;">(CO-45)</span>
<span class="t" style="left:871.75px;top:967.88px;font-size:24px;color:#fff;letter-spacing:0.35px;-webkit-text-stroke:0.45px #fff;">Coinsurance</span>
<span class="t" style="left:873px;top:1002.98px;font-size:24px;color:#fff;letter-spacing:1.2px;-webkit-text-stroke:0.45px #fff;">Amount</span>
<span class="t" style="left:871.5px;top:1037.98px;font-size:24px;color:#fff;letter-spacing:0.35px;-webkit-text-stroke:0.45px #fff;">(PR-2)</span>
<span class="t" style="left:1024.75px;top:967.88px;font-size:24px;color:#fff;letter-spacing:0.97px;-webkit-text-stroke:0.45px #fff;">Co-payment</span>
<span class="t" style="left:1026px;top:1002.98px;font-size:24px;color:#fff;letter-spacing:1.2px;-webkit-text-stroke:0.45px #fff;">Amount</span>
<span class="t" style="left:1024.5px;top:1037.98px;font-size:24px;color:#fff;letter-spacing:0.35px;-webkit-text-stroke:0.45px #fff;">(PR-3)</span>
<span class="t" style="left:1178px;top:967.88px;font-size:24px;color:#fff;letter-spacing:0.86px;-webkit-text-stroke:0.45px #fff;">Deductible</span>
<span class="t" style="left:1180px;top:1002.98px;font-size:24px;color:#fff;letter-spacing:1.2px;-webkit-text-stroke:0.45px #fff;">Amount</span>
<span class="t" style="left:1178.5px;top:1037.98px;font-size:24px;color:#fff;letter-spacing:0.35px;-webkit-text-stroke:0.45px #fff;">(PR-1)</span>
<span class="t" style="left:1332px;top:967.88px;font-size:24px;color:#fff;letter-spacing:1px;-webkit-text-stroke:0.45px #fff;width:142px;overflow:hidden;">Other</span>
<span class="t" style="left:1331px;top:1002.98px;font-size:24px;color:#fff;letter-spacing:1.08px;-webkit-text-stroke:0.45px #fff;width:143px;overflow:hidden;">Patient</span>
<span class="t" style="left:1331px;top:1037.98px;font-size:24px;color:#fff;letter-spacing:0.54px;-webkit-text-stroke:0.45px #fff;width:143px;overflow:hidden;">Responsibility</span>
<span class="t" style="left:1485px;top:967.88px;font-size:24px;color:#fff;letter-spacing:0.92px;-webkit-text-stroke:0.45px #fff;">Payment</span>
<span class="t" style="left:1487px;top:1002.98px;font-size:24px;color:#fff;letter-spacing:1.2px;-webkit-text-stroke:0.45px #fff;">Amount</span>
<span class="t" style="left:1608px;top:967.88px;font-size:24px;color:#fff;letter-spacing:0.88px;-webkit-text-stroke:0.45px #fff;">Balance</span>
<span class="t" style="left:1610px;top:1002.98px;font-size:24px;color:#fff;letter-spacing:1.2px;-webkit-text-stroke:0.45px #fff;">Amount</span>
<span class="t" style="left:1732px;top:967.88px;font-size:24px;color:#fff;letter-spacing:1.08px;-webkit-text-stroke:0.45px #fff;">Adj.</span>
<span class="t" style="left:1730.75px;top:1002.98px;font-size:24px;color:#fff;letter-spacing:0.17px;-webkit-text-stroke:0.45px #fff;">Code</span>
<span class="t" style="left:1916px;top:967.88px;font-size:24px;color:#fff;letter-spacing:1.08px;-webkit-text-stroke:0.45px #fff;">Adj.</span>
<span class="t" style="left:1916px;top:1002.98px;font-size:24px;color:#fff;letter-spacing:1.2px;-webkit-text-stroke:0.45px #fff;">Amount</span>
<span class="t" style="left:2038.5px;top:967.88px;font-size:24px;color:#fff;letter-spacing:1.03px;-webkit-text-stroke:0.45px #fff;">Total Adj.</span>
<span class="t" style="left:2039px;top:1002.98px;font-size:24px;color:#fff;letter-spacing:1.2px;-webkit-text-stroke:0.45px #fff;">Amount</span>
<span class="t" style="left:2159.75px;top:967.88px;font-size:24px;color:#696969;letter-spacing:0.62px;-webkit-text-stroke:0.45px #696969;width:111.25px;overflow:hidden;">Insurance</span>
<span class="t" style="left:2160px;top:1002.98px;font-size:24px;color:#696969;letter-spacing:0.88px;-webkit-text-stroke:0.45px #696969;width:111px;overflow:hidden;">Balance</span>
<span class="t" style="left:2282.25px;top:967.88px;font-size:24px;color:#696969;letter-spacing:0.62px;-webkit-text-stroke:0.45px #696969;width:110.75px;overflow:hidden;">Insurance</span>
<span class="t" style="left:2283.5px;top:1002.98px;font-size:24px;color:#696969;letter-spacing:0.2px;-webkit-text-stroke:0.45px #696969;width:109.5px;overflow:hidden;">Overpayment</span>
<span class="t" style="left:2405.5px;top:967.88px;font-size:24px;color:#696969;letter-spacing:1.08px;-webkit-text-stroke:0.45px #696969;">Patient</span>
<span class="t" style="left:2405.5px;top:1002.98px;font-size:24px;color:#696969;letter-spacing:0.88px;-webkit-text-stroke:0.45px #696969;">Balance</span>
<span class="t" style="left:2530px;top:967.88px;font-size:24px;color:#696969;letter-spacing:1.18px;-webkit-text-stroke:0.45px #696969;">WriteOff</span>
<span class="t" style="left:2530px;top:1002.98px;font-size:24px;color:#696969;letter-spacing:1.2px;-webkit-text-stroke:0.45px #696969;">Amount</span>
<span class="t" style="left:2651px;top:967.88px;font-size:24px;color:#696969;letter-spacing:0.69px;-webkit-text-stroke:0.45px #696969;">Leave</span>
<span class="t" style="left:2652px;top:1002.98px;font-size:24px;color:#696969;letter-spacing:1.17px;-webkit-text-stroke:0.45px #696969;">Open</span>
<svg class="b" style="left:40px;top:1089px" width="33" height="21" viewBox="40 1089 33 21"><g transform="translate(40,1089)" fill="#e8a93c"><path d="M0,17 V2.5 A2.5,2.5 0 0 1 2.5,0 H9.8 L12.8,3 H24.5 A2.5,2.5 0 0 1 27,5.5 V7.5 H9.2 A4,4 0 0 0 5.7,9.5 Z"/><path d="M8.6,9.3 H30.6 A1.3,1.3 0 0 1 31.7,11.3 L27,19.2 A2.6,2.6 0 0 1 24.8,20.5 H1.9 A.8,.8 0 0 1 1.3,19.3 L6.3,10.6 A2.6,2.6 0 0 1 8.6,9.3 Z"/></g></svg>
<svg class="b" style="left:88px;top:1085.2px" width="28" height="28" viewBox="88 1085.2 28 28"><g fill="none" stroke="#a52f27" stroke-width="3.6"><circle cx="102" cy="1099.2" r="11.7"/><path d="M93.7,1090.9 L110.3,1107.5"/></g></svg>
<span class="t" style="left:136px;top:1087.14px;font-size:25px;color:#1e2337;letter-spacing:1.06px;">11730</span>
<svg class="b" style="left:566px;top:1086px" width="29" height="28" viewBox="566 1086 29 28"><g transform="translate(566,1086)" fill="#a5302a"><circle cx="3" cy="3" r="3"/><rect x="1.2" y="3" width="3.6" height="24" rx="1.2"/><path d="M3,4.6 L4.5,4.6 C9,2.6 13,3.6 16.5,5.2 C20,6.8 23.5,6.6 26.3,5 C27.2,4.5 28,5 28,5.9 V18.5 C28,19.3 27.6,19.8 27,20.2 C23.5,22.3 20,22 16.5,20.6 C12.8,19.1 9,18.7 4.5,21 L3,21 Z"/></g></svg>
<span class="t" style="left:312.5px;top:1087.14px;font-size:25px;color:#1e2337;letter-spacing:0.3px;">300.00</span>
<span class="t" style="left:465.75px;top:1087.14px;font-size:25px;color:#1e2337;letter-spacing:0.25px;">250.00</span>
<span class="t" style="left:648px;top:1087.14px;font-size:25px;color:#1e2337;letter-spacing:0.08px;">0.00</span>
<span class="t" style="left:801.5px;top:1087.14px;font-size:25px;color:#1e2337;letter-spacing:0.08px;">0.00</span>
<span class="t" style="left:955px;top:1087.14px;font-size:25px;color:#1e2337;letter-spacing:0.08px;">0.00</span>
<span class="t" style="left:1108px;top:1087.14px;font-size:25px;color:#1e2337;letter-spacing:0.08px;">0.00</span>
<span class="t" style="left:1261.5px;top:1087.14px;font-size:25px;color:#1e2337;letter-spacing:0.08px;">0.00</span>
<span class="t" style="left:1415px;top:1087.14px;font-size:25px;color:#1e2337;letter-spacing:0.08px;">0.00</span>
<span class="t" style="left:1538px;top:1087.14px;font-size:25px;color:#1e2337;letter-spacing:0.08px;">0.00</span>
<span class="t" style="left:1632.5px;top:1087.14px;font-size:25px;color:#1e2337;">400.00</span>
<span class="t" style="left:1928.5px;top:1087.14px;font-size:25px;color:#a5302a;letter-spacing:0.42px;">-100.00</span>
<span class="t" style="left:2051.5px;top:1087.14px;font-size:25px;color:#a5302a;letter-spacing:0.42px;">-100.00</span>
<span class="t" style="left:2213px;top:1087.14px;font-size:25px;color:#1e2337;letter-spacing:0.08px;">0.00</span>
<span class="t" style="left:2335px;top:1087.14px;font-size:25px;color:#1e2337;letter-spacing:0.08px;">0.00</span>
<span class="t" style="left:2430.5px;top:1087.14px;font-size:25px;color:#1e2337;">400.00</span>
<span class="t" style="left:2581px;top:1087.14px;font-size:25px;color:#1e2337;letter-spacing:0.08px;">0.00</span>
<span class="t" style="left:312.5px;top:1147.14px;font-size:25px;color:#1e2337;letter-spacing:0.3px;">300.00</span>
<span class="t" style="left:465.75px;top:1147.14px;font-size:25px;color:#1e2337;letter-spacing:0.25px;">250.00</span>
<span class="t" style="left:648px;top:1147.14px;font-size:25px;color:#1e2337;letter-spacing:0.08px;">0.00</span>
<span class="t" style="left:801.5px;top:1147.14px;font-size:25px;color:#1e2337;letter-spacing:0.08px;">0.00</span>
<span class="t" style="left:955px;top:1147.14px;font-size:25px;color:#1e2337;letter-spacing:0.08px;">0.00</span>
<span class="t" style="left:1108px;top:1147.14px;font-size:25px;color:#1e2337;letter-spacing:0.08px;">0.00</span>
<span class="t" style="left:1261.5px;top:1147.14px;font-size:25px;color:#1e2337;letter-spacing:0.08px;">0.00</span>
<span class="t" style="left:1415px;top:1147.14px;font-size:25px;color:#1e2337;letter-spacing:0.08px;">0.00</span>
<span class="t" style="left:1538px;top:1147.14px;font-size:25px;color:#1e2337;letter-spacing:0.08px;">0.00</span>
<span class="t" style="left:1632.5px;top:1147.14px;font-size:25px;color:#1e2337;">400.00</span>
<span class="t" style="left:1928.5px;top:1147.14px;font-size:25px;color:#1e2337;letter-spacing:0.42px;">-100.00</span>
<span class="t" style="left:2051.5px;top:1147.14px;font-size:25px;color:#1e2337;letter-spacing:0.42px;">-100.00</span>
<span class="t" style="left:2213px;top:1147.14px;font-size:25px;color:#1e2337;letter-spacing:0.08px;">0.00</span>
<span class="t" style="left:2335px;top:1147.14px;font-size:25px;color:#1e2337;letter-spacing:0.08px;">0.00</span>
<span class="t" style="left:2430.5px;top:1147.14px;font-size:25px;color:#1e2337;">400.00</span>
<span class="t" style="left:2581px;top:1147.14px;font-size:25px;color:#1e2337;letter-spacing:0.08px;">0.00</span>
<span class="t" style="left:1730.5px;top:1090.68px;font-size:24px;color:#1e2337;letter-spacing:0.9px;width:174.7px;overflow:hidden;">B10 - Allowed amount</span>
<div class="b" style="left:2669.5px;top:1080.5px;width:35px;height:34.5px;box-sizing:border-box;border:2px solid #dadcdf;border-radius:7px;background:#edf5fd"></div>
<div class="b" style="left:1713px;top:1060px;width:204px;height:81px;box-sizing:border-box;border:5px solid #e8391d"></div>
<span class="t" style="left:47.5px;top:1221.68px;font-size:24px;color:#1e2337;letter-spacing:0.61px;">Total: 1</span>
<span class="t" style="left:2065px;top:1223.68px;font-size:24px;color:#1e2337;letter-spacing:0.11px;">Page Size:</span>
<span class="t" style="left:2188.75px;top:1225.68px;font-size:24px;color:#1e2337;letter-spacing:2px;">10</span>
<div class="b" style="left:2181px;top:1264.3px;width:200px;height:1.5px;background:#e4e4e4;"></div>
<svg class="b" style="left:2355.5px;top:1233px" width="21" height="13" viewBox="2355.5 1233 21 13"><path d="M2358.3,1235.8 L2366,1243.2 L2373.7,1235.8" fill="none" stroke="#1e2337" stroke-width="2"/></svg>
<svg class="b" style="left:2410px;top:1224px" width="26" height="26" viewBox="2410 1224 26 26"><rect x="2411" y="1225" width="3.8" height="23.6" fill="#4d4d4d"/><path d="M2434,1227 L2415.5,1237 L2434,1247 Z" fill="#4d4d4d"/></svg>
<svg class="b" style="left:2471.5px;top:1224px" width="20" height="26" viewBox="2471.5 1224 20 26"><path d="M2489.5,1227 L2472.5,1237 L2489.5,1247 Z" fill="#4d4d4d"/></svg>
<span class="t" style="left:2526.25px;top:1225.68px;font-size:24px;color:#1e2337;">1</span>
<div class="b" style="left:2517px;top:1260.3px;width:80px;height:1.5px;background:#e4e4e4;"></div>
<svg class="b" style="left:2613px;top:1224px" width="20" height="26" viewBox="2613 1224 20 26"><path d="M2614,1227 L2631,1237 L2614,1247 Z" fill="#4d4d4d"/></svg>
<svg class="b" style="left:2671px;top:1224px" width="26" height="26" viewBox="2671 1224 26 26"><path d="M2672,1227 L2690.5,1237 L2672,1247 Z" fill="#4d4d4d"/><rect x="2691.3" y="1225" width="3.8" height="23.6" fill="#4d4d4d"/></svg>
<div class="b" style="left:32px;top:1383px;width:2704px;height:147px;box-sizing:border-box;border:2px solid #d9d9d9;background:#fff;border-bottom:none;"></div>
<div class="b" style="left:34px;top:1385px;width:2700px;height:58px;background:#f2f3f5;"></div>
<div class="b" style="left:34px;top:1442px;width:2700px;height:2px;background:#d9d9d9;"></div>
<div class="b" style="left:113px;top:1394.5px;width:2px;height:33px;background:#d6d9dc;"></div>
<div class="b" style="left:1138px;top:1394.5px;width:2px;height:33px;background:#d6d9dc;"></div>
<div class="b" style="left:1678px;top:1394.5px;width:2px;height:33px;background:#d6d9dc;"></div>
<div class="b" style="left:2218px;top:1394.5px;width:2px;height:33px;background:#d6d9dc;"></div>
<div class="b" style="left:2489px;top:1394.5px;width:2px;height:33px;background:#d6d9dc;"></div>
<div class="b" style="left:2678px;top:1394.5px;width:2px;height:33px;background:#d6d9dc;"></div>
<div class="b" style="left:2731px;top:1394.5px;width:3px;height:29.5px;background:#d6d9dc;"></div>
<span class="t" style="left:122.75px;top:1399.18px;font-size:24px;color:#696969;letter-spacing:0.62px;-webkit-text-stroke:0.45px #696969;">Insurance</span>
<span class="t" style="left:1149px;top:1399.18px;font-size:24px;color:#696969;letter-spacing:0.48px;-webkit-text-stroke:0.45px #696969;">Payment Code</span>
<span class="t" style="left:1689.5px;top:1399.18px;font-size:24px;color:#696969;letter-spacing:0.23px;-webkit-text-stroke:0.45px #696969;">Reason Code</span>
<span class="t" style="left:2232px;top:1399.18px;font-size:24px;color:#696969;letter-spacing:1.2px;-webkit-text-stroke:0.45px #696969;">Amount</span>
<span class="t" style="left:2501px;top:1399.18px;font-size:24px;color:#696969;letter-spacing:0.95px;-webkit-text-stroke:0.45px #696969;">Status</span>
<div class="b" style="left:0px;top:1510px;width:2778px;height:6px;background:#f9f9f9;"></div>
<svg class="b" style="left:2812px;top:268px" width="24" height="30" viewBox="2812 268 24 30"><path d="M2830,272.9 L2819.8,282.75 L2830,292.6" fill="none" stroke="#0c4a3b" stroke-width="4.2"/></svg>
<svg class="b" style="left:2790px;top:348px" width="56" height="52" viewBox="2790 348 56 52"><g fill="none" stroke="#ef8850" stroke-width="2.9" stroke-linejoin="round"><path d="M2800,353.3 H2826.5 A5,5 0 0 1 2831.5,358.3 V374.7 A5,5 0 0 1 2826.5,379.7 H2810.5 L2802,386 V379.7 H2800 A5,5 0 0 1 2795,374.7 V358.3 A5,5 0 0 1 2800,353.3 Z"/><path d="M2833,358.3 H2833.7 A5,5 0 0 1 2838.7,363.3 V381 A5,5 0 0 1 2833.7,386 H2832 V393 L2822.5,386 H2806"/></g></svg>
<div class="b" style="left:2782px;top:417px;width:82px;height:2px;background:#e3e3e3;"></div>
<div class="b" style="left:2787px;top:430.5px;width:76px;height:76px;border-radius:50%;background:#2a6099"></div>
<span class="t" style="left:2806.25px;top:452.59px;font-size:33px;color:#fff;-webkit-text-stroke:0.25px #fff;transform:scaleX(0.82);transform-origin:50% 50%;">JS</span>
<div class="b" style="left:2787px;top:528px;width:76px;height:76px;border-radius:50%;background:#2a6099"></div>
<span class="t" style="left:2805.62px;top:550.09px;font-size:33px;color:#fff;-webkit-text-stroke:0.25px #fff;transform:scaleX(0.82);transform-origin:50% 50%;">PJ</span>
<div class="b" style="left:2787px;top:625.5px;width:76px;height:76px;border-radius:50%;background:#2a6099"></div>
<span class="t" style="left:2804.12px;top:647.59px;font-size:33px;color:#fff;-webkit-text-stroke:0.25px #fff;transform:scaleX(0.88);transform-origin:50% 50%;">JM</span>
<div class="b" style="left:2787px;top:722px;width:76px;height:76px;border-radius:50%;background:#2a6099"></div>
<span class="t" style="left:2802.88px;top:744.09px;font-size:33px;color:#fff;-webkit-text-stroke:0.25px #fff;transform:scaleX(0.97);transform-origin:50% 50%;">AR</span>
<div class="b" style="left:2787px;top:819px;width:76px;height:76px;border-radius:50%;background:#2a6099"></div>
<span class="t" style="left:2802.38px;top:841.09px;font-size:33px;color:#fff;-webkit-text-stroke:0.25px #fff;transform:scaleX(0.9);transform-origin:50% 50%;">BE</span>
<div class="b" style="left:2787px;top:918px;width:34px;height:34px;border-radius:50%;background:#2a6099"></div>
<span class="t" style="left:2793.62px;top:927.77px;font-size:15px;color:#fff;-webkit-text-stroke:0.4px #fff;transform:scaleX(0.96);transform-origin:50% 50%;">BE</span>
<div class="b" style="left:2829px;top:918px;width:34px;height:34px;border-radius:50%;background:#2a6099"></div>
<span class="t" style="left:2837.5px;top:927.77px;font-size:15px;color:#fff;-webkit-text-stroke:0.4px #fff;transform:scaleX(0.96);transform-origin:50% 50%;">JS</span>
<div class="b" style="left:2787px;top:956.5px;width:34px;height:34px;border-radius:50%;background:#2a6099"></div>
<span class="t" style="left:2794.5px;top:966.27px;font-size:15px;color:#fff;-webkit-text-stroke:0.4px #fff;transform:scaleX(0.96);transform-origin:50% 50%;">JM</span>
<div class="b" style="left:2829px;top:956.5px;width:34px;height:34px;border-radius:50%;background:#2a6099"></div>
<span class="t" style="left:2838.88px;top:966.27px;font-size:15px;color:#fff;-webkit-text-stroke:0.4px #fff;transform:scaleX(0.96);transform-origin:50% 50%;">JJ</span>
<div class="b" style="left:2787px;top:1035px;width:34px;height:34px;border-radius:50%;background:#2a6099"></div>
<span class="t" style="left:2795.5px;top:1044.77px;font-size:15px;color:#fff;-webkit-text-stroke:0.4px #fff;transform:scaleX(0.96);transform-origin:50% 50%;">JS</span>
<div class="b" style="left:2829px;top:1035px;width:34px;height:34px;border-radius:50%;background:#2a6099"></div>
<span class="t" style="left:2838.88px;top:1044.77px;font-size:15px;color:#fff;-webkit-text-stroke:0.4px #fff;transform:scaleX(0.96);transform-origin:50% 50%;">JJ</span>
<div class="b" style="left:2787px;top:1113px;width:34px;height:34px;border-radius:50%;background:#2a6099"></div>
<span class="t" style="left:2794px;top:1122.77px;font-size:15px;color:#fff;-webkit-text-stroke:0.4px #fff;transform:scaleX(0.96);transform-origin:50% 50%;">AR</span>
<div class="b" style="left:2829px;top:1113px;width:34px;height:34px;border-radius:50%;background:#2a6099"></div>
<span class="t" style="left:2836.5px;top:1122.77px;font-size:15px;color:#fff;-webkit-text-stroke:0.4px #fff;transform:scaleX(0.96);transform-origin:50% 50%;">JM</span>
<div class="b" style="left:2787px;top:1151px;width:34px;height:34px;border-radius:50%;background:#2a6099"></div>
<span class="t" style="left:2795.12px;top:1160.77px;font-size:15px;color:#fff;-webkit-text-stroke:0.4px #fff;transform:scaleX(0.96);transform-origin:50% 50%;">PJ</span>
<div class="b" style="left:2787px;top:1208px;width:34px;height:34px;border-radius:50%;background:#2a6099"></div>
<span class="t" style="left:2794px;top:1217.77px;font-size:15px;color:#fff;-webkit-text-stroke:0.4px #fff;transform:scaleX(0.96);transform-origin:50% 50%;">AR</span>
<div class="b" style="left:2829px;top:1208px;width:34px;height:34px;border-radius:50%;background:#2a6099"></div>
<span class="t" style="left:2835.62px;top:1217.77px;font-size:15px;color:#fff;-webkit-text-stroke:0.4px #fff;transform:scaleX(0.96);transform-origin:50% 50%;">BE</span>
<div class="b" style="left:2787px;top:1243px;width:34px;height:34px;border-radius:50%;background:#2a6099"></div>
<span class="t" style="left:2795.5px;top:1252.77px;font-size:15px;color:#fff;-webkit-text-stroke:0.4px #fff;transform:scaleX(0.96);transform-origin:50% 50%;">JS</span>
<div class="b" style="left:2829px;top:1243px;width:34px;height:34px;border-radius:50%;background:#2a6099"></div>
<span class="t" style="left:2836.5px;top:1252.77px;font-size:15px;color:#fff;-webkit-text-stroke:0.4px #fff;transform:scaleX(0.96);transform-origin:50% 50%;">JM</span>
<div class="b" style="left:2787px;top:1276.5px;width:34px;height:14.5px;overflow:hidden"><div style="width:34px;height:34px;border-radius:50%;background:#2a6099"></div><span class="t" style="left:8px;top:9px;font-size:15px;color:#fff">PJ</span></div>
<div class="b" style="left:2786px;top:1308px;width:78px;height:2px;background:#e3e3e3;"></div>
<svg class="b" style="left:2802px;top:1340px" width="46" height="42" viewBox="2802 1340 46 42"><g fill="none" stroke="#ef8850" stroke-width="2.9" stroke-linejoin="round"><path d="M2812.5,1345.8 H2838 A5,5 0 0 1 2843,1350.8 V1365 A5,5 0 0 1 2838,1370 H2821.5 L2812.5,1376.3 V1370 A5,5 0 0 1 2807.3,1365 V1350.8 A5,5 0 0 1 2812.5,1345.8 Z"/><path d="M2815.5,1354.6 H2835 M2815.5,1360.8 H2835" stroke-width="2.4"/></g></svg>
<div class="b" style="left:2786px;top:1406px;width:78px;height:2px;background:#e3e3e3;"></div>
<svg class="b" style="left:2794px;top:1424px" width="54" height="56" viewBox="2794 1424 54 56"><circle cx="2825" cy="1456" r="18" fill="none" stroke="#ef8850" stroke-width="2.6"/><circle cx="2806" cy="1436" r="9" fill="#17395c"/><path d="M2819,1450.5 A6.2,6.2 0 1 1 2828.5,1455.8 C2826,1457.4 2825,1458.5 2825,1461.5" fill="none" stroke="#ef8850" stroke-width="2.6" stroke-linecap="round"/><circle cx="2825" cy="1467.3" r="1.9" fill="#ef8850"/></svg>
</div>
</body></html>
